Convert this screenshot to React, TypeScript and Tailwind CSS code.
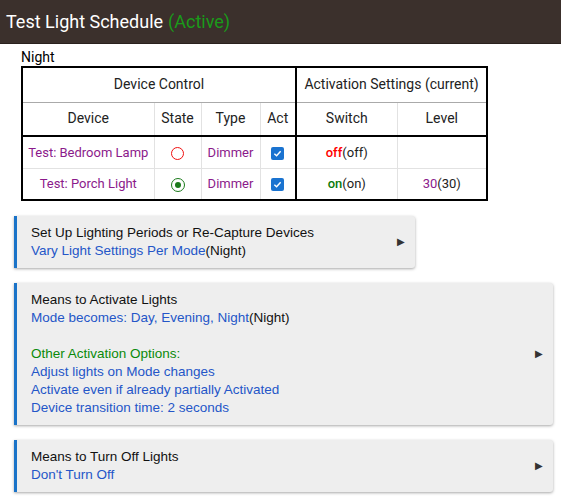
import React from 'react';

const roboto = { fontFamily: 'Roboto, "Liberation Sans", sans-serif' };

const Card: React.FC<{ children: React.ReactNode; className?: string }> = ({ children, className }) => (
  <div
    className={`relative bg-[#eeeeee] border-l-[3px] border-[#1a73c8] rounded-r-[3px] shadow-[0_1px_3px_rgba(0,0,0,0.35)] pl-[14px] pr-10 py-2 text-[13.5px] leading-[18px] text-[#111] font-[family-name:Liberation_Sans,Arial,sans-serif] ${className ?? ''}`}
  >
    {children}
    <span className="absolute right-[10px] top-1/2 -translate-y-1/2 text-[10px] text-[#333]">▶</span>
  </div>
);

const Check = () => (
  <span className="inline-flex w-[13px] h-[13px] bg-[#1a73d0] rounded-[2px] items-center justify-center align-middle">
    <svg width="9" height="9" viewBox="0 0 10 10">
      <path d="M1.5 5.2 L4 7.5 L8.5 2.5" stroke="white" strokeWidth="1.6" fill="none" />
    </svg>
  </span>
);

export default function App() {
  const cell = 'border border-[#e2e2e2] text-center px-0 whitespace-nowrap';
  const body = 'border border-[#e2e2e2] text-center px-0 whitespace-nowrap text-[13px]';
  return (
    <div className="w-[561px] h-[500px] bg-white overflow-hidden" style={roboto}>
      {/* Header */}
      <div className="h-[44px] bg-[#3b302c] flex items-center px-[6px] border-b border-[#2a211e]">
        <span className="text-white text-[18px]">Test Light Schedule</span>
        <span className="text-[#1a9a1a] text-[18px] ml-[5px]">(Active)</span>
      </div>

      <div className="pl-[21px] pt-[4px]">
        <div className="text-[14px] leading-[18px] text-black">Night</div>
        <table className="table-fixed border-collapse border-2 border-black text-[14px] text-[#222] w-[465px]">
          <colgroup>
            <col className="w-[132px]" />
            <col className="w-[47px]" />
            <col className="w-[59px]" />
            <col className="w-[36px]" />
            <col className="w-[101px]" />
            <col className="w-[90px]" />
          </colgroup>
          <tbody>
            <tr className="h-[35px]">
              <td colSpan={4} className="border-b border-b-[#aaa] border-r-2 border-r-black text-center">
                Device Control
              </td>
              <td colSpan={2} className="border-b border-b-[#aaa] text-center whitespace-nowrap">
                Activation Settings (current)
              </td>
            </tr>
            <tr className="h-[34px] border-b-2 border-black">
              <td className={cell}>Device</td>
              <td className={cell}>State</td>
              <td className={cell}>Type</td>
              <td className={`${cell} border-r-2 border-r-black`}>Act</td>
              <td className={cell}>Switch</td>
              <td className={cell}>Level</td>
            </tr>
            <tr className="h-[32px]">
              <td className={`${body} text-[#8b1a8b]`}>Test: Bedroom Lamp</td>
              <td className={body}>
                <span className="inline-block w-[13px] h-[13px] rounded-full border-[1.5px] border-[#f01010] align-middle" />
              </td>
              <td className={`${body} text-[#8b1a8b]`}>Dimmer</td>
              <td className={`${body} border-r-2 border-r-black`}>
                <Check />
              </td>
              <td className={body}>
                <span className="text-[#f00] font-medium">off</span>(off)
              </td>
              <td className={body}></td>
            </tr>
            <tr className="h-[32px]">
              <td className={`${body} text-[#8b1a8b]`}>Test: Porch Light</td>
              <td className={body}>
                <span className="inline-flex w-[14px] h-[14px] rounded-full border-[1.5px] border-[#1a7a1a] items-center justify-center align-middle">
                  <span className="w-[6px] h-[6px] rounded-full bg-[#1a7a1a]" />
                </span>
              </td>
              <td className={`${body} text-[#8b1a8b]`}>Dimmer</td>
              <td className={`${body} border-r-2 border-r-black`}>
                <Check />
              </td>
              <td className={body}>
                <span className="text-[#0a7a0a] font-medium">on</span>(on)
              </td>
              <td className={body}>
                <span className="text-[#8b1a8b]">30</span>(30)
              </td>
            </tr>
          </tbody>
        </table>
      </div>

      <div className="pl-[14px] pr-[8px] flex flex-col">
        <Card className="mt-[15px] w-[401px]">
          <div>Set Up Lighting Periods or Re-Capture Devices</div>
          <div>
            <span className="text-[#2456c8]">Vary Light Settings Per Mode</span>(Night)
          </div>
        </Card>

        <Card className="mt-[15px]">
          <div>Means to Activate Lights</div>
          <div>
            <span className="text-[#2456c8]">Mode becomes: Day, Evening, Night</span>(Night)
          </div>
          <div className="h-[18px]" />
          <div className="text-[#0a8a0a]">Other Activation Options:</div>
          <div className="text-[#2456c8]">Adjust lights on Mode changes</div>
          <div className="text-[#2456c8]">Activate even if already partially Activated</div>
          <div className="text-[#2456c8]">Device transition time: 2 seconds</div>
        </Card>

        <Card className="mt-[15px]">
          <div>Means to Turn Off Lights</div>
          <div className="text-[#2456c8]">Don't Turn Off</div>
        </Card>
      </div>
    </div>
  );
}
